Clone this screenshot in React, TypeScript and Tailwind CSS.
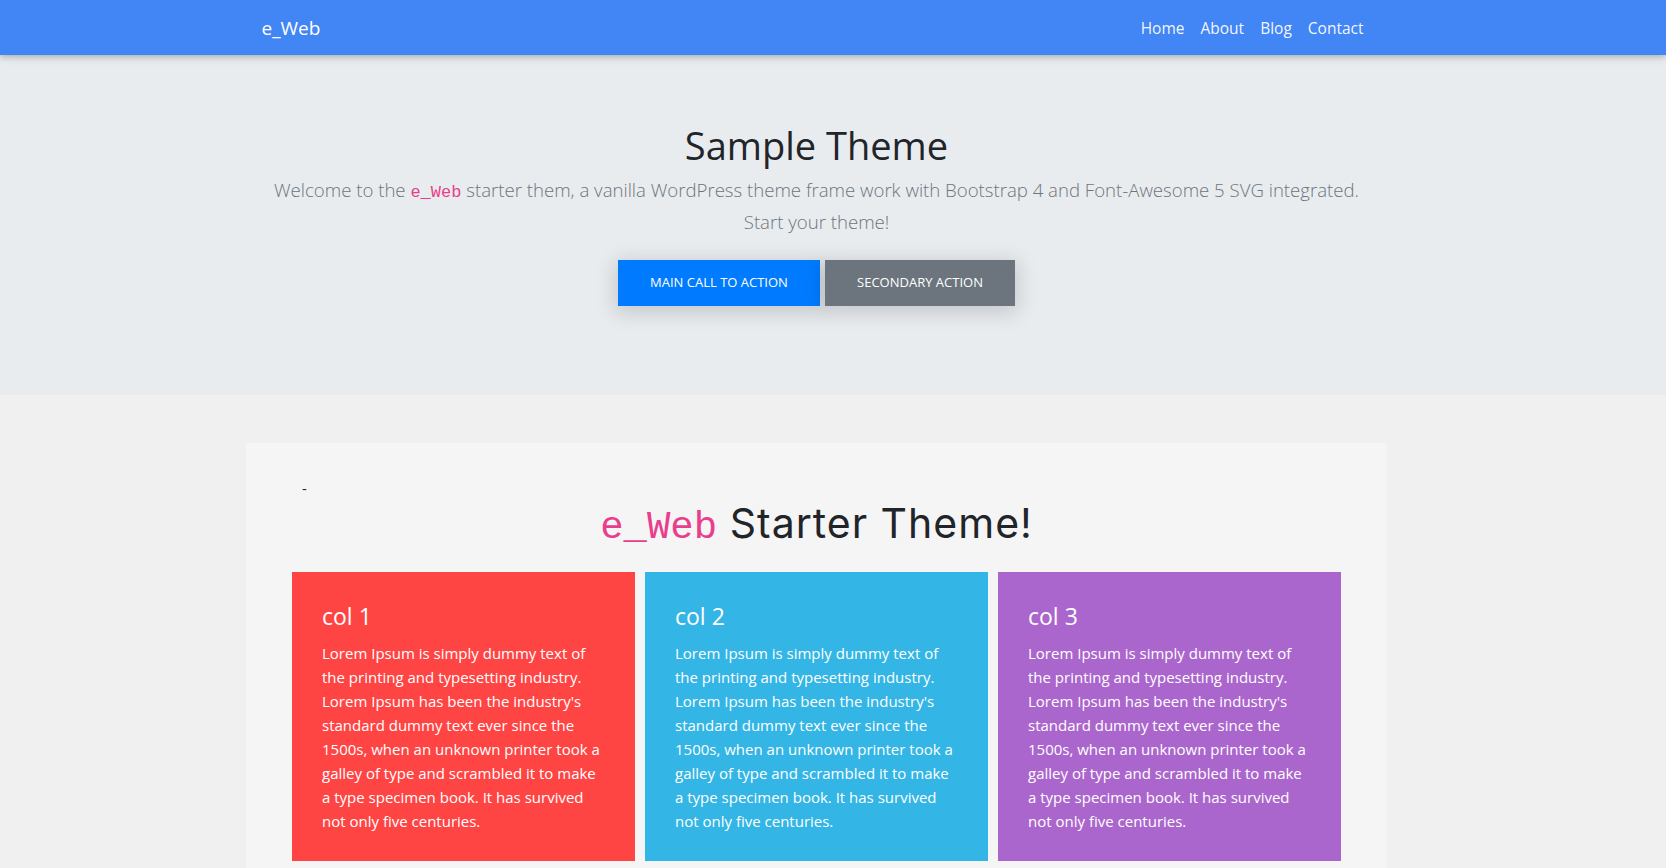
const body = "font-['Open_Sans',sans-serif]"

const lorem =
	"Lorem Ipsum is simply dummy text of the printing and typesetting industry. Lorem Ipsum has been the industry's standard dummy text ever since the 1500s, when an unknown printer took a galley of type and scrambled it to make a type specimen book. It has survived not only five centuries."

const cols = [
	{ title: "col 1", bg: "bg-[#ff4444]" },
	{ title: "col 2", bg: "bg-[#33b5e5]" },
	{ title: "col 3", bg: "bg-[#aa66cc]" },
]

function Navbar() {
	return (
		<nav className="relative z-10 h-[55px] bg-[#4285f4] pr-[33px] shadow-[0_2px_5px_0_rgba(0,0,0,0.16),0_2px_10px_0_rgba(0,0,0,0.12)]">
			<div className="mx-auto flex h-full w-[1140px] items-center justify-between px-[15px] pt-[2px]">
				<a className="text-[19px] text-white">e_Web</a>
				<ul className="flex items-center text-[15.5px] text-white/95">
					{["Home", "About", "Blog", "Contact"].map((l) => (
						<li key={l}>
							<a className="block px-2">{l}</a>
						</li>
					))}
				</ul>
			</div>
		</nav>
	)
}

function Hero() {
	return (
		<section className="h-[340px] bg-[#e9ecef] pr-[33px] pt-[66px]">
			<div className="mx-auto flex w-[1140px] flex-col items-center px-[15px] text-center">
				<h1 className="text-[38px] leading-[48px] text-[#212529]">Sample Theme</h1>
				<p className="mt-[5px] max-w-[1100px] text-[18.6px] font-light leading-8 text-[#6c757d]">
					Welcome to the{" "}
					<code className="font-['Liberation_Mono',monospace] text-[17px] leading-none text-[#e83e8c]">e_Web</code>{" "}
					starter them, a vanilla WordPress theme frame work with Bootstrap 4 and Font-Awesome 5 SVG integrated.
					Start your theme!
				</p>
				<div className="mt-[22px] flex gap-[5px]">
					<button className="h-[46px] w-[202px] bg-[#007bff] text-[13px] uppercase text-white shadow-[0_4px_20px_3px_rgba(0,0,0,0.15)]">
						Main call to action
					</button>
					<button className="h-[46px] w-[190px] bg-[#6c757d] text-[13px] uppercase text-white shadow-[0_4px_20px_3px_rgba(0,0,0,0.15)]">
						Secondary action
					</button>
				</div>
			</div>
		</section>
	)
}

export default function App() {
	return (
		<div className={`min-h-screen bg-[#f0f0f0] ${body}`}>
			<Navbar />
			<Hero />
			<main className="pr-[33px] pt-[48px]">
				<div className="mx-auto w-[1141px] bg-[#f5f5f5] px-[46px] pb-10 pt-[35px]">
					<div className="ml-[10px] h-[21px] text-[15px] leading-[21px] text-[#212529]">-</div>
					<h2 className="h-[48px] text-center font-['Inter',sans-serif] text-[41px] leading-[48px] tracking-[1px] text-[#212529]">
						<code className="font-['Liberation_Mono',monospace] text-[39px] leading-none tracking-normal text-[#e83e8c]">
							e_Web
						</code>{" "}
						Starter Theme!
					</h2>
					<div className="mt-[25px] grid grid-cols-3 gap-[10px]">
						{cols.map((c) => (
							<div key={c.title} className={`${c.bg} px-[30px] pb-[28px] pt-[30px] text-white`}>
								<h3 className="mb-[10px] text-[23px] leading-[29px]">{c.title}</h3>
								<p className="text-[15px] leading-6">{lorem}</p>
							</div>
						))}
					</div>
				</div>
			</main>
		</div>
	)
}
